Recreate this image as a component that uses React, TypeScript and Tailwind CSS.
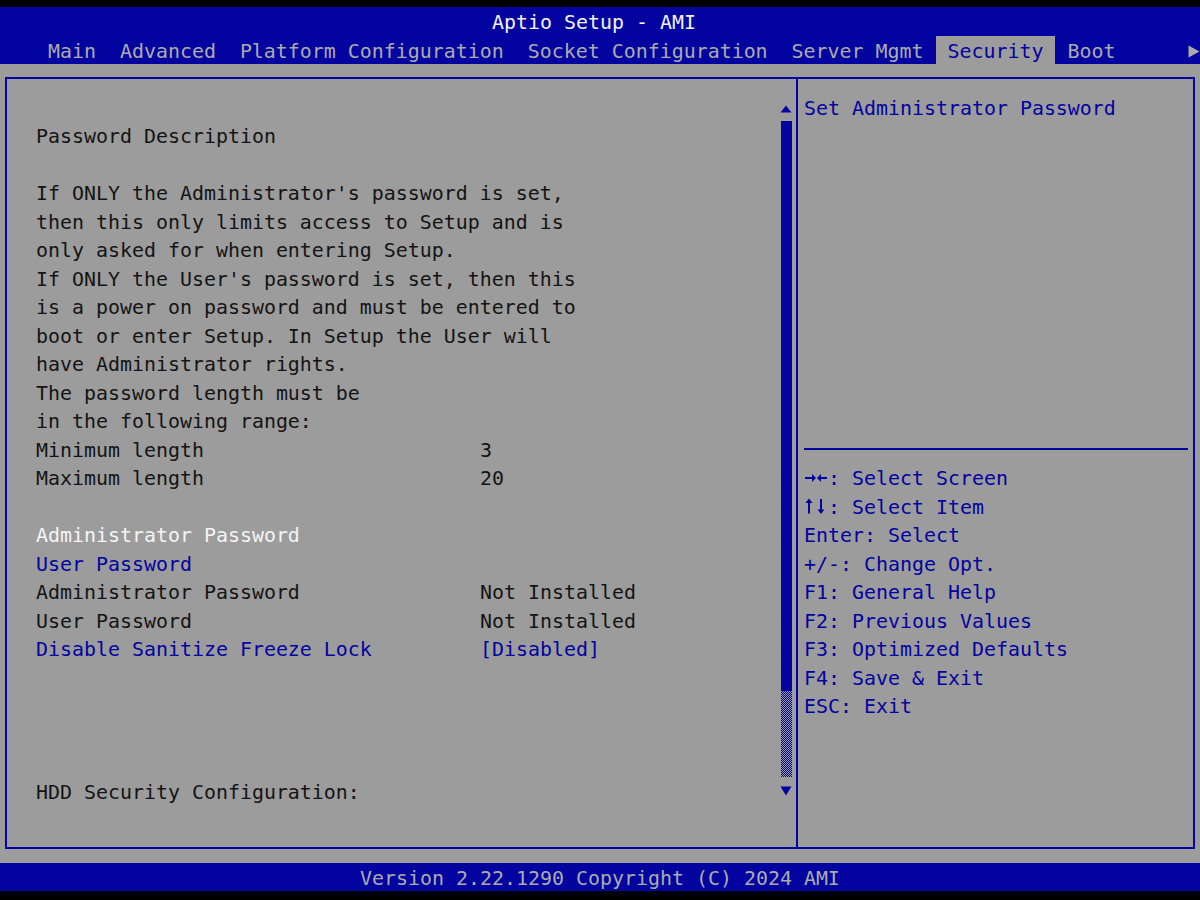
import React from "react";

// Aptio text-mode screen: 100 columns x 31 rows, each cell 12px x 28.52px.

const Row = ({
  children,
  className = "",
}: {
  children?: React.ReactNode;
  className?: string;
}) => (
  <div className={`h-[28.52px] leading-[32.5px] whitespace-pre ${className}`}>
    {children}
  </div>
);

const Blank = ({ n }: { n: number }) => (
  <>
    {Array.from({ length: n }).map((_, i) => (
      <Row key={i} />
    ))}
  </>
);

const ValueRow = ({
  label,
  value,
  className = "",
}: {
  label: string;
  value: string;
  className?: string;
}) => (
  <Row className={`flex ${className}`}>
    <span className="w-[444px] shrink-0">{label}</span>
    <span>{value}</span>
  </Row>
);

const LeftRightArrows = () => (
  <svg width="24" height="28.52" viewBox="0 0 24 28.52" className="shrink-0">
    <line x1="1" y1="15" x2="9" y2="15" stroke="#0303a0" strokeWidth="2" />
    <polygon points="8,11 12,15 8,19" fill="#0303a0" />
    <polygon points="17,11 13,15 17,19" fill="#0303a0" />
    <line x1="16" y1="15" x2="23" y2="15" stroke="#0303a0" strokeWidth="2" />
  </svg>
);

const UpDownArrows = () => (
  <svg width="24" height="28.52" viewBox="0 0 24 28.52" className="shrink-0">
    <polygon points="1.5,11 5,6.5 8.5,11" fill="#0303a0" />
    <line x1="5" y1="10" x2="5" y2="21.5" stroke="#0303a0" strokeWidth="2" />
    <line x1="17" y1="7" x2="17" y2="18.5" stroke="#0303a0" strokeWidth="2" />
    <polygon points="13.5,17.5 17,22 20.5,17.5" fill="#0303a0" />
  </svg>
);

const Scrollbar = () => (
  <div className="w-[12px] mr-[4px] shrink-0 flex flex-col">
    <div className="h-[28.52px]">
      <svg width="12" height="28.52" viewBox="0 0 12 28.52">
        <polygon points="0.5,19.5 6,12.5 11.5,19.5" fill="#0303a0" />
      </svg>
    </div>
    <div className="h-[570.4px] w-[11px] ml-[1px] bg-[#0303a0]" />
    <div className="h-[85.56px] w-[11px] ml-[1px] bg-[repeating-conic-gradient(#0303a0_0_25%,transparent_0_50%)] bg-[length:2px_2px]" />
    <div className="h-[28.52px]">
      <svg width="12" height="28.52" viewBox="0 0 12 28.52">
        <polygon points="0.5,9.5 11.5,9.5 6,18.5" fill="#0303a0" />
      </svg>
    </div>
  </div>
);

const helpKeys: [React.ReactNode, string][] = [
  [<LeftRightArrows key="lr" />, ": Select Screen"],
  [<UpDownArrows key="ud" />, ": Select Item"],
  ["Enter", ": Select"],
  ["+/-", ": Change Opt."],
  ["F1", ": General Help"],
  ["F2", ": Previous Values"],
  ["F3", ": Optimized Defaults"],
  ["F4", ": Save & Exit"],
  ["ESC", ": Exit"],
];

export default function App() {
  return (
    <div className="w-[1200px] h-[900px] bg-black flex flex-col overflow-hidden font-['DejaVu_Sans_Mono','Liberation_Mono',monospace] text-[19.93px]">
      <div className="h-[7px] shrink-0" />

      {/* title and menu tabs */}
      <header className="bg-[#0303a0] shrink-0">
        <Row className="pl-[492px] text-[#f2f2f2]">Aptio Setup - AMI</Row>
        <div className="h-[28.52px] flex text-[#ababab] whitespace-pre leading-[32.5px]">
          <span>{"    Main  Advanced  Platform Configuration  Socket Configuration  Server Mgmt "}</span>
          <span className="bg-[#9c9c9c] text-[#0303a0] h-[28.52px]">{" Security "}</span>
          <span>{" Boot"}</span>
          <span className="ml-auto w-[12px] h-[28.52px]">
            <svg width="12" height="28.52" viewBox="0 0 12 28.52">
              <polygon points="0.5,9.5 11.5,15.5 0.5,21.5" fill="#ababab" />
            </svg>
          </span>
        </div>
      </header>

      {/* main window */}
      <main className="bg-[#9c9c9c] h-[798.5px] shrink-0 pt-[13px] px-[5px]">
        <div className="h-[772px] border-2 border-[#0303a0] flex">
          {/* left pane */}
          <section className="w-[791px] shrink-0 border-r-2 border-[#0303a0] flex pt-[13.5px]">
            <div className="flex-1 pl-[29px] text-[#141414]">
              <Row />
              <Row>Password Description</Row>
              <Row />
              <Row>If ONLY the Administrator's password is set,</Row>
              <Row>then this only limits access to Setup and is</Row>
              <Row>only asked for when entering Setup.</Row>
              <Row>If ONLY the User's password is set, then this</Row>
              <Row>is a power on password and must be entered to</Row>
              <Row>boot or enter Setup. In Setup the User will</Row>
              <Row>have Administrator rights.</Row>
              <Row>The password length must be</Row>
              <Row>in the following range:</Row>
              <ValueRow label="Minimum length" value="3" />
              <ValueRow label="Maximum length" value="20" />
              <Row />
              <Row className="text-[#f4f4f4]">Administrator Password</Row>
              <Row className="text-[#0303a0]">User Password</Row>
              <ValueRow label="Administrator Password" value="Not Installed" />
              <ValueRow label="User Password" value="Not Installed" />
              <ValueRow
                label="Disable Sanitize Freeze Lock"
                value="[Disabled]"
                className="text-[#0303a0]"
              />
              <Blank n={4} />
              <Row>HDD Security Configuration:</Row>
            </div>
            <Scrollbar />
          </section>

          {/* help pane */}
          <aside className="flex-1 pl-[6px] pt-[13.5px] text-[#0303a0]">
            <Row>Set Administrator Password</Row>
            <Blank n={11} />
            <div className="h-[28.52px] flex items-center">
              <div className="w-[384px] h-[2px] bg-[#0303a0]" />
            </div>
            {helpKeys.map(([key, text], i) => (
              <Row key={i} className="flex">
                {typeof key === "string" ? <span>{key}</span> : key}
                <span>{text}</span>
              </Row>
            ))}
          </aside>
        </div>
      </main>

      {/* status line */}
      <footer className="bg-[#0303a0] shrink-0">
        <Row className="text-center text-[#ababab]">
          Version 2.22.1290 Copyright (C) 2024 AMI
        </Row>
      </footer>
    </div>
  );
}
